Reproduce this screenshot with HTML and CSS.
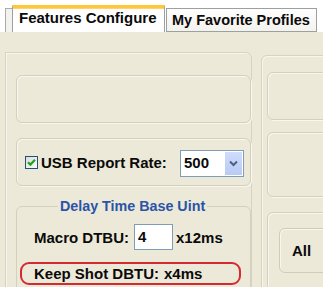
FILE: index.html
```html
<!DOCTYPE html>
<html>
<head>
<meta charset="utf-8">
<link rel="stylesheet" href="styles.css">
</head>
<body>
<div class="tabs">
  <div class="tab-stub"></div>
  <div class="tab active">Features Configure</div>
  <div class="tab">My Favorite Profiles</div>
</div>
<div class="page">
  <div class="panel left">
    <div class="box"></div>
    <div class="box usb">
      <span class="check"><svg width="9" height="9" viewBox="0 0 9 9"><path d="M1 4.2 L3.4 6.6 L8 1.8" fill="none" stroke="#21a121" stroke-width="2.2"/></svg></span>
      <span class="label">USB Report Rate:</span>
      <span class="select"><span class="sel-val">500</span><span class="sel-btn"><svg width="9" height="7" viewBox="0 0 9 7"><path d="M1 1.5 L4.5 5 L8 1.5" fill="none" stroke="#4d6185" stroke-width="2"/></svg></span></span>
    </div>
    <fieldset class="group">
      <legend>Delay Time Base Uint</legend>
      <div class="row">
        <span class="label">Macro DTBU:</span>
        <span class="input">4</span>
        <span class="unit">x12ms</span>
      </div>
      <div class="row marked">
        <span class="label">Keep Shot DBTU:</span>
        <span class="unit">x4ms</span>
      </div>
    </fieldset>
  </div>
  <div class="panel right">
    <div class="rbox a"></div>
    <div class="rbox b"></div>
    <div class="rbox c"><div class="btn">All</div></div>
  </div>
</div>
</body>
</html>
```
FILE: styles.css
```css
html, body {
  margin: 0;
  padding: 0;
  overflow: hidden;
  width: 323px;
  height: 287px;
}
body {
  background: #ece9d8;
  font-family: "Liberation Sans", Arial, sans-serif;
  font-weight: bold;
  font-size: 15px;
  color: #0a0a0a;
}
.tabs {
  display: flex;
  align-items: flex-start;
  background: #fff;
  height: 32px;
  padding-left: 5px;
  padding-top: 5px;
  box-sizing: border-box;
}
.tab-stub {
  width: 7px;
  height: 24px;
  margin-top: 3px;
  box-sizing: border-box;
  border-left: 1px solid #a8aeb0;
  border-top: 1px solid #a8aeb0;
  background: #f3f2ec;
}
.tab {
  box-sizing: border-box;
  margin-top: 3px;
  height: 24px;
  width: 151px;
  margin-left: 1px;
  border: 1px solid #9aa1a3;
  background: linear-gradient(#fefefe, #f3f2ec);
  font-size: 14.5px;
  line-height: 23px;
  padding-left: 5px;
  white-space: nowrap;
}
.tab.active {
  margin-top: 0;
  margin-left: 0;
  height: 27px;
  width: 153px;
  border-bottom: none;
  border-top: 3px solid #ffc83c;
  box-shadow: inset 0 1px 0 #ffd36b;
  background: #fff;
  padding-left: 6px;
  font-size: 15px;
  line-height: 20px;
}
.page {
  display: flex;
  align-items: flex-start;
  padding-top: 20px;
  padding-left: 5px;
  gap: 9px;
}
.panel {
  box-sizing: border-box;
  border: 1px solid #d6d3c0;
  border-radius: 0 6px 0 0;
  box-shadow: inset 1px 1px 0 #f6f5ee;
  height: 300px;
}
.panel.left {
  width: 266px;
  padding: 22px 0 0 10px;
}
.panel.right {
  width: 120px;
  margin-top: 3px;
  border-radius: 6px 0 0 0;
  padding: 16px 0 0 5px;
  flex-shrink: 0;
}
.box, .rbox {
  box-sizing: border-box;
  border: 1px solid #d3d0bc;
  border-radius: 6px;
  box-shadow: inset 1px 1px 0 #f7f6f0, 1px 1px 0 #f7f6f0;
}
.box {
  width: 235px;
  height: 48px;
  margin-bottom: 15px;
}
.box.usb {
  display: flex;
  align-items: center;
  padding: 0 6px 0 8px;
  margin-bottom: 12px;
}
.check {
  box-sizing: border-box;
  width: 13px;
  height: 13px;
  border: 1px solid #1c5180;
  background: linear-gradient(135deg, #dcdcd7, #fbfbf9);
  display: flex;
  align-items: center;
  justify-content: center;
  flex-shrink: 0;
}
.usb .label {
  margin-left: 3px;
  white-space: nowrap;
}
.select {
  margin-left: auto;
  box-sizing: border-box;
  width: 64px;
  height: 27px;
  border: 1px solid #7f9db9;
  background: #fff;
  display: flex;
  align-items: stretch;
  margin-top: 3px;
  flex-shrink: 0;
}
.sel-val {
  flex: 1;
  padding-left: 3px;
  line-height: 23px;
}
.sel-btn {
  width: 17px;
  margin: 1px;
  background: linear-gradient(#cfdcfb, #b7cbf5);
  display: flex;
  align-items: center;
  justify-content: center;
}
.group {
  margin: 0;
  width: 235px;
  box-sizing: border-box;
  border: 1px solid #d3d0bc;
  border-radius: 6px;
  padding: 10px 0 20px 0;
  min-width: 0;
}
.group legend {
  color: #2b53a8;
  font-size: 14.3px;
  line-height: 16px;
  margin-left: 41px;
  padding: 0 2px;
}
.row {
  display: flex;
  align-items: center;
  height: 26px;
  padding-left: 17px;
  white-space: nowrap;
}
.input {
  box-sizing: border-box;
  width: 39px;
  height: 26px;
  border: 1px solid #7f9db9;
  background: #fff;
  margin-left: 5px;
  padding-left: 3px;
  line-height: 23px;
}
.unit {
  margin-left: 3px;
}
.row.marked {
  margin: 12px 0 0 3px;
  width: 221px;
  height: 23px;
  box-sizing: border-box;
  border: 2px solid #d42a32;
  border-radius: 9px;
  padding-left: 12px;
}
.row.marked .unit {
  margin-left: 5px;
}
.rbox {
  width: 120px;
}
.rbox.a { height: 48px; margin-bottom: 12px; }
.rbox.b { height: 65px; margin-bottom: 15px; }
.rbox.c { height: 80px; padding: 15px 0 0 11px; }
.btn {
  box-sizing: border-box;
  width: 80px;
  height: 45px;
  border: 1px solid #cfccb8;
  border-radius: 6px;
  box-shadow: inset 1px 1px 0 #f7f6f0;
  padding-left: 12px;
  line-height: 43px;
}
```
